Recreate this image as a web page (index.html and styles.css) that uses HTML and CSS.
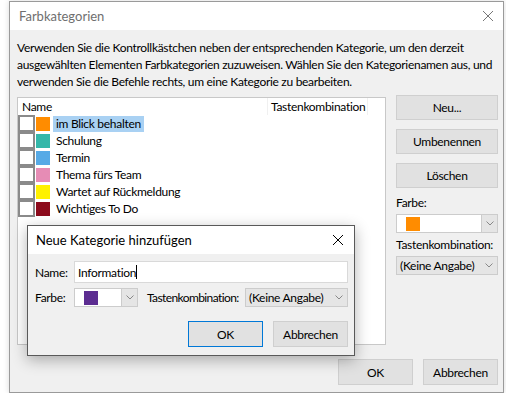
FILE: index.html
```html
<!DOCTYPE html>
<html lang="de">
<head>
    <meta charset="UTF-8">
    <title>Farbkategorien</title>
    <link rel="stylesheet" href="styles.css">
</head>
<body>
    <div class="window">
        <div class="titlebar">
            <span class="title">Farbkategorien</span>
            <span class="close">
                <svg width="12" height="12" viewBox="0 0 12 12"><path d="M1 1L11 11M11 1L1 11" stroke="#777" stroke-width="1"/></svg>
            </span>
        </div>
        <div class="content">
            <p class="intro">Verwenden Sie die Kontrollkästchen neben der entsprechenden Kategorie, um den derzeit<br>ausgewählten Elementen Farbkategorien zuzuweisen. Wählen Sie den Kategorienamen aus, und<br>verwenden Sie die Befehle rechts, um eine Kategorie zu bearbeiten.</p>
            <div class="main">
                <div class="list">
                    <div class="list-head">
                        <span class="col-name">Name</span>
                        <span class="col-key">Tastenkombination</span>
                        <span class="col-rest"></span>
                    </div>
                    <div class="row">
                        <span class="check"></span><span class="swatch orange"></span><span class="label selected">im Blick behalten</span>
                    </div>
                    <div class="row">
                        <span class="check"></span><span class="swatch teal"></span><span class="label">Schulung</span>
                    </div>
                    <div class="row">
                        <span class="check"></span><span class="swatch blue"></span><span class="label">Termin</span>
                    </div>
                    <div class="row">
                        <span class="check"></span><span class="swatch pink"></span><span class="label">Thema fürs Team</span>
                    </div>
                    <div class="row">
                        <span class="check"></span><span class="swatch yellow"></span><span class="label">Wartet auf Rückmeldung</span>
                    </div>
                    <div class="row">
                        <span class="check"></span><span class="swatch red"></span><span class="label">Wichtiges To Do</span>
                    </div>
                </div>
                <div class="side">
                    <button class="btn">Neu...</button>
                    <button class="btn">Umbenennen</button>
                    <button class="btn">Löschen</button>
                    <div class="field-label">Farbe:</div>
                    <div class="select white">
                        <span class="select-value"><span class="swatch orange"></span></span>
                        <span class="arrow"><svg width="8" height="5" viewBox="0 0 8 5"><path d="M0.5 0.5L4 4L7.5 0.5" fill="none" stroke="#888"/></svg></span>
                    </div>
                    <div class="field-label">Tastenkombination:</div>
                    <div class="select gray">
                        <span class="select-value">(Keine Angabe)</span>
                        <span class="arrow"><svg width="8" height="5" viewBox="0 0 8 5"><path d="M0.5 0.5L4 4L7.5 0.5" fill="none" stroke="#888"/></svg></span>
                    </div>
                </div>
            </div>
            <div class="footer">
                <button class="btn wide">OK</button>
                <button class="btn wide">Abbrechen</button>
            </div>
        </div>

        <div class="popup">
            <div class="popup-title">
                <span>Neue Kategorie hinzufügen</span>
                <svg width="12" height="12" viewBox="0 0 12 12"><path d="M1 1L11 11M11 1L1 11" stroke="#000" stroke-width="1"/></svg>
            </div>
            <div class="popup-body">
                <div class="popup-row">
                    <span class="popup-label">Name:</span>
                    <div class="input">Information<span class="caret"></span></div>
                </div>
                <div class="popup-row">
                    <span class="popup-label">Farbe:</span>
                    <div class="select white small">
                        <span class="select-value"><span class="swatch purple"></span></span>
                        <span class="arrow"><svg width="8" height="5" viewBox="0 0 8 5"><path d="M0.5 0.5L4 4L7.5 0.5" fill="none" stroke="#888"/></svg></span>
                    </div>
                    <span class="popup-label key">Tastenkombination:</span>
                    <div class="select gray keysel">
                        <span class="select-value">(Keine Angabe)</span>
                        <span class="arrow"><svg width="8" height="5" viewBox="0 0 8 5"><path d="M0.5 0.5L4 4L7.5 0.5" fill="none" stroke="#888"/></svg></span>
                    </div>
                </div>
                <div class="popup-buttons">
                    <button class="btn wide default">OK</button>
                    <button class="btn wide">Abbrechen</button>
                </div>
            </div>
        </div>
    </div>
</body>
</html>
```

FILE: styles.css
```css
* { margin: 0; padding: 0; box-sizing: border-box; }
body {
    font-family: Lato, "Liberation Sans", Arial, sans-serif;
    font-size: 12px;
    letter-spacing: -0.3px;
    color: #000;
    background: #fff;
}
.window {
    position: relative;
    margin: 1px 0 0 9px;
    width: 495px;
    height: 392px;
    border: 1px solid #9a9a9a;
    box-shadow: 0 0 6px rgba(0, 0, 0, 0.15);
    display: flex;
    flex-direction: column;
}
.titlebar {
    height: 28px;
    background: #fff;
    display: flex;
    align-items: center;
    justify-content: space-between;
    padding: 0 9px 0 9px;
}
.title { font-size: 13px; color: #6f6f6f; letter-spacing: 0; }
.close { display: flex; }
.content {
    flex: 1;
    background: #f0f0f0;
    padding: 9px 3px 0 7px;
}
.intro { line-height: 17px; white-space: nowrap; }
.main {
    display: flex;
    gap: 10px;
    margin-top: 7px;
}
.list {
    width: 369px;
    height: 248px;
    background: #fff;
    border: 1px solid #c8c8c8;
}
.list-head {
    display: flex;
    height: 17px;
    line-height: 17px;
}
.col-name { width: 250px; padding-left: 4px; border-right: 1px solid #f0f0f0; }
.col-key { width: 100px; padding-left: 3px; border-right: 1px solid #f0f0f0; }
.row {
    display: flex;
    align-items: center;
    height: 17px;
}
.check {
    width: 17px;
    height: 17px;
    border: 2px solid #8a8a8a;
    background: #fff;
}
.swatch {
    display: inline-block;
    width: 14px;
    height: 14px;
    margin-left: 1px;
}
.orange { background: #ff8c00; }
.teal { background: #34b7a9; }
.blue { background: #57aae6; }
.pink { background: #e68cb5; }
.yellow { background: #fff100; }
.red { background: #8c0b1c; }
.purple { background: #5c2d91; }
.label {
    margin-left: 3px;
    padding: 0 3px;
    line-height: 16px;
}
.selected { background: #a9d1f3; }
.side {
    width: 102px;
    margin-top: -2px;
    display: flex;
    flex-direction: column;
}
.btn {
    font-family: inherit;
    font-size: 12px;
    letter-spacing: -0.3px;
    color: #000;
    height: 25px;
    background: #e1e1e1;
    border: 1px solid #cfcfcf;
    margin-bottom: 9px;
}
.field-label { line-height: 16px; margin: -2px 0 3px; white-space: nowrap; }
.select {
    display: flex;
    height: 19px;
    border: 1px solid #cccccc;
    margin-bottom: 6px;
    white-space: nowrap;
}
.select.white { background: #fff; }
.select.gray { background: #e5e5e5; }
.select-value {
    flex: 1;
    display: flex;
    align-items: center;
    padding-left: 3px;
}
.select.white .select-value .swatch { margin-left: 6px; }
.arrow {
    width: 16px;
    display: flex;
    align-items: center;
    justify-content: center;
}
.select.white .arrow { background: #e5e5e5; border-left: 1px solid #ccc; }
.footer {
    display: flex;
    justify-content: flex-end;
    gap: 10px;
    margin: 14px 2px 0 0;
}
.btn.wide { width: 75px; height: 26px; margin: 0; }
.popup {
    position: absolute;
    left: 17px;
    top: 223px;
    width: 328px;
    height: 131px;
    border: 1px solid #595959;
    box-shadow: 0 4px 14px rgba(0, 0, 0, 0.3);
    display: flex;
    flex-direction: column;
}
.popup-title {
    height: 28px;
    background: #fff;
    display: flex;
    align-items: center;
    justify-content: space-between;
    padding: 0 10px 0 8px;
    font-size: 13px;
    letter-spacing: 0;
}
.popup-body {
    flex: 1;
    background: #f0f0f0;
    padding: 7px 6px 0 7px;
}
.popup-row {
    display: flex;
    align-items: center;
    margin-bottom: 5px;
}
.popup-label { width: 39px; flex-shrink: 0; white-space: nowrap; }
.popup-label.key { width: 98px; margin-left: 9px; letter-spacing: -0.6px; }
.input {
    flex: 1;
    height: 22px;
    background: #fff;
    border: 1px solid #d9d9d9;
    padding-left: 3px;
    display: flex;
    align-items: center;
}
.caret { width: 1px; height: 14px; background: #000; }
.select.small { width: 64px; flex-shrink: 0; margin: 0; }
.select.keysel { flex: 1; min-width: 0; margin: 0; }
.popup-buttons {
    display: flex;
    justify-content: flex-end;
    gap: 10px;
    margin-top: 14px;
}
.btn.default { border-color: #0078d7; }
```
